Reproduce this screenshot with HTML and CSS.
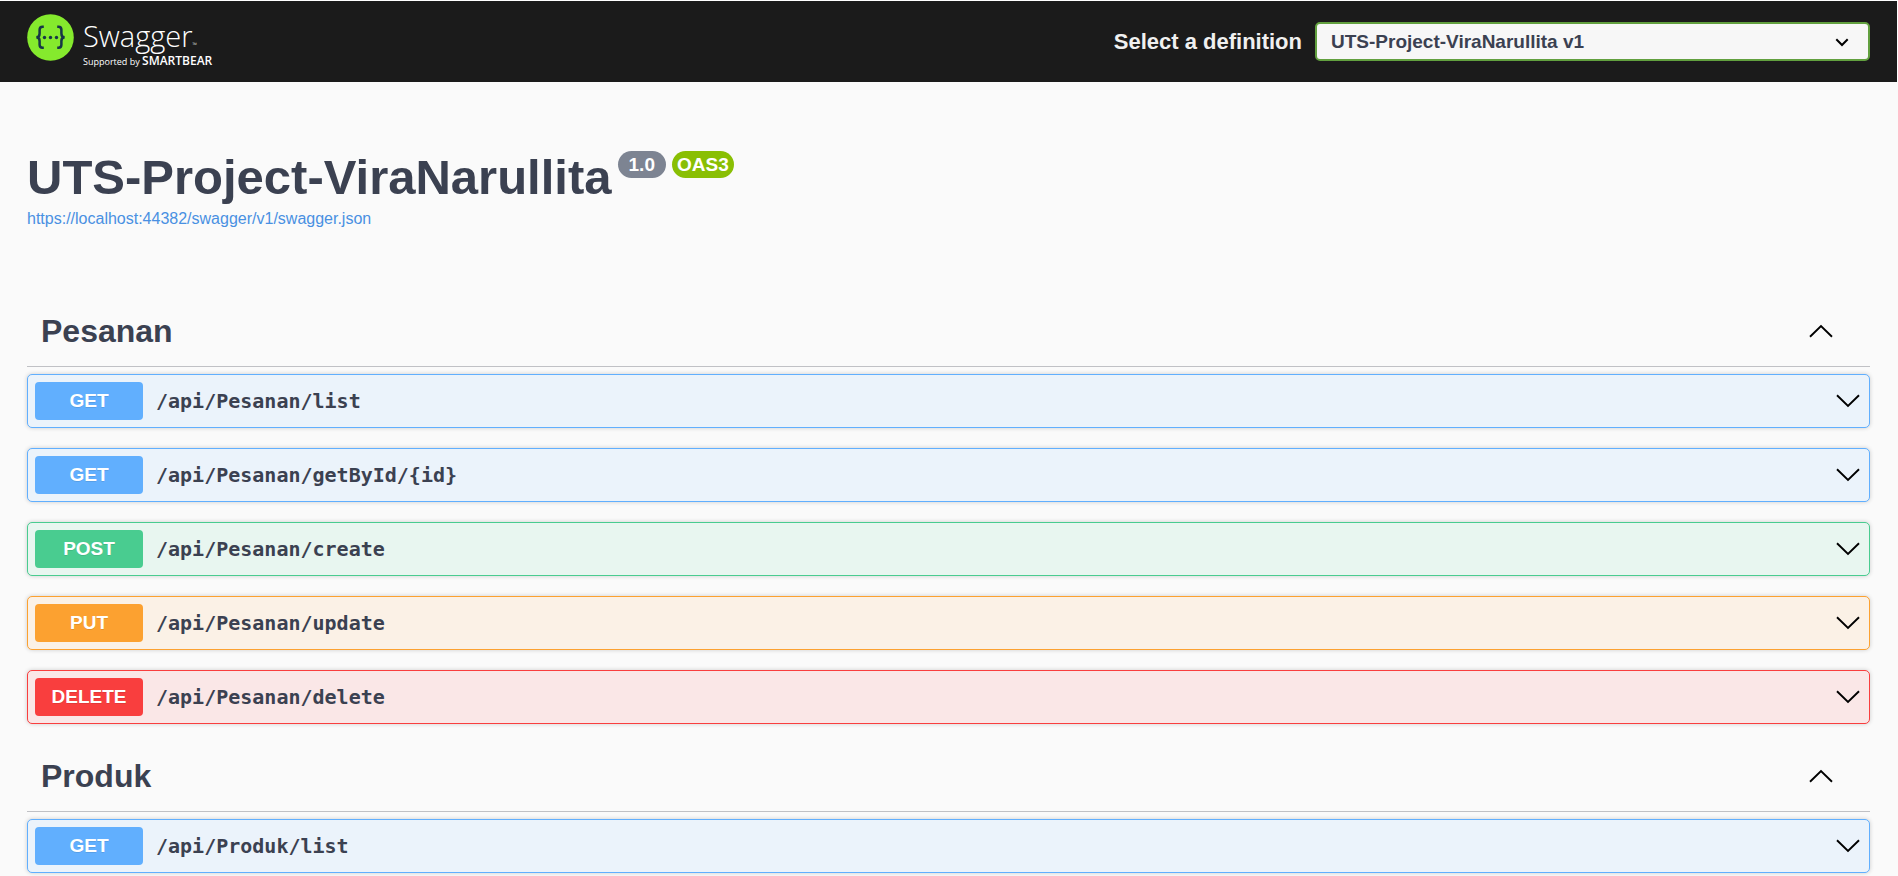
FILE: index.html
```html
<!DOCTYPE html>
<html lang="en">
<head>
<meta charset="utf-8">
<title>Swagger UI</title>
<link rel="stylesheet" href="styles.css">
</head>
<body>
<svg class="sprite" aria-hidden="true">
  <symbol id="arrow-down" viewBox="0 0 24 14"><path d="M1 1.2 12 12 23 1.2" fill="none" stroke="#000" stroke-width="1.9"/></symbol>
  <symbol id="arrow-up" viewBox="0 0 24 14"><path d="M1 12.8 12 2 23 12.8" fill="none" stroke="#000" stroke-width="1.9"/></symbol>
</svg>
<header class="topbar">
  <a class="logo" href="#" aria-label="Swagger, supported by SmartBear">
    <svg class="logo-mark" viewBox="0 0 47 47" aria-hidden="true">
      <circle cx="23.5" cy="23.5" r="23.3" fill="#85ea2d"/>
      <g fill="none" stroke="#173647" stroke-width="2.5">
        <path d="M16.8 12.8h-1.2c-2.1 0-3 1-3 3v3.700c0 2.400-.9 3.800-3.300 3.800 2.400 0 3.300 1.400 3.300 3.800v3.700c0 2 .9 3 3 3h1.200"/>
        <path d="M30.200 12.800h1.200c2.100 0 3 1 3 3v3.700c0 2.400.9 3.800 3.300 3.800-2.400 0-3.300 1.400-3.300 3.800v3.700c0 2-.9 3-3 3h-1.200"/>
      </g>
      <g fill="#173647"><circle cx="17.500" cy="23.500" r="1.700"/><circle cx="23.500" cy="23.500" r="1.700"/><circle cx="29.500" cy="23.500" r="1.700"/></g>
    </svg>
    <span class="logo-text">
      <span class="logo-name">Swagger<small class="logo-tm">™</small></span>
      <span class="logo-support">Supported by <b class="logo-brand">SMARTBEAR</b></span>
    </span>
  </a>
  <div class="definition">
    <label class="definition-label" for="definition">Select a definition</label>
    <div class="select-wrap">
      <select class="definition-select" id="definition"><option>UTS-Project-ViraNarullita v1</option></select>
      <svg class="select-arrow" viewBox="0 0 14 9" aria-hidden="true"><path d="M1.300 1.300 7 7l5.700-5.700" fill="none" stroke="#000" stroke-width="2"/></svg>
    </div>
  </div>
</header>
<main class="page">
  <section class="info">
    <div class="heading">
      <h1 class="title">UTS-Project-ViraNarullita</h1>
      <span class="version">1.0</span>
      <span class="version version-oas">OAS3</span>
    </div>
    <a class="spec-link" href="#">https://localhost:44382/swagger/v1/swagger.json</a>
  </section>
  <section class="tag">
    <button class="tag-header" type="button"><span class="tag-name">Pesanan</span><svg class="arrow"><use href="#arrow-up"/></svg></button>
    <button class="op get" type="button"><span class="method">GET</span><span class="path">/api/Pesanan/list</span><svg class="arrow"><use href="#arrow-down"/></svg></button>
    <button class="op get" type="button"><span class="method">GET</span><span class="path">/api/Pesanan/getById/{id}</span><svg class="arrow"><use href="#arrow-down"/></svg></button>
    <button class="op post" type="button"><span class="method">POST</span><span class="path">/api/Pesanan/create</span><svg class="arrow"><use href="#arrow-down"/></svg></button>
    <button class="op put" type="button"><span class="method">PUT</span><span class="path">/api/Pesanan/update</span><svg class="arrow"><use href="#arrow-down"/></svg></button>
    <button class="op delete" type="button"><span class="method">DELETE</span><span class="path">/api/Pesanan/delete</span><svg class="arrow"><use href="#arrow-down"/></svg></button>
  </section>
  <section class="tag">
    <button class="tag-header" type="button"><span class="tag-name">Produk</span><svg class="arrow"><use href="#arrow-up"/></svg></button>
    <button class="op get" type="button"><span class="method">GET</span><span class="path">/api/Produk/list</span><svg class="arrow"><use href="#arrow-down"/></svg></button>
  </section>
</main>
</body>
</html>
```
FILE: styles.css
```css
* { box-sizing: border-box; }
body {
  margin: 0;
  background: #fafafa;
  color: #3b4151;
  font-family: "Liberation Sans", Arial, sans-serif;
}
button { font: inherit; color: inherit; text-align: left; cursor: pointer; }
.sprite { display: none; }

.topbar {
  display: flex;
  align-items: center;
  justify-content: space-between;
  padding: 13px 27px;
  border-top: 1px solid #fff;
  border-right: 1px solid #fff;
  background: #1b1b1b;
}
.logo { display: flex; gap: 9px; color: #fff; text-decoration: none; font-family: "Open Sans", sans-serif; }
.logo-mark { width: 47px; height: 47px; }
.logo-text { display: flex; flex-direction: column; padding-top: 3px; }
.logo-name { font-size: 29px; font-weight: 300; line-height: 38px; }
.logo-tm { font-size: 6px; line-height: 1; }
.logo-support { font-size: 9px; line-height: 14px; white-space: nowrap; }
.logo-brand { font-size: 12px; font-weight: 600; line-height: 1; }

.definition { display: flex; align-items: center; gap: 13px; }
.definition-label { color: #f0f0f0; font-size: 22px; font-weight: 700; }
.select-wrap { position: relative; width: 555px; }
.definition-select {
  display: block;
  width: 100%;
  padding: 7px 44px 6px 14px;
  border: 2px solid #62a03f;
  border-radius: 5px;
  background: #f7f7f7;
  color: #3b4151;
  font: 700 19px/22px "Liberation Sans", Arial, sans-serif;
  appearance: none;
}
.select-arrow { position: absolute; right: 21px; top: 16px; width: 14px; height: 9px; pointer-events: none; }

.page { padding: 0 28px 0 27px; }
.info { padding: 66px 0 67px; }
.heading { display: flex; align-items: flex-start; gap: 6px; }
.title { margin: 0; font-size: 49px; line-height: 58px; }
.version {
  margin-top: 3px;
  padding: 0 11px;
  border-radius: 14px;
  background: #7d8492;
  color: #fff;
  font-size: 19px;
  font-weight: 700;
  line-height: 27px;
}
.version-oas { padding: 0 5px; background: #89bf04; }
.spec-link { display: block; width: fit-content; color: #4990e2; font-size: 16px; line-height: 26px; text-decoration: none; }

.tag-header {
  display: flex;
  align-items: center;
  justify-content: space-between;
  width: 100%;
  margin-bottom: 7px;
  padding: 13px 37px 16px 14px;
  border: 0;
  border-bottom: 1px solid #c0c1c5;
  background: none;
}
.tag-name { font-size: 32px; font-weight: 700; line-height: 38px; }
.arrow { width: 24px; height: 14px; }

.op {
  display: flex;
  align-items: center;
  width: 100%;
  margin-bottom: 20px;
  padding: 7px 9px 7px 7px;
  border: 1px solid;
  border-radius: 5px;
  box-shadow: 0 0 4px rgba(0, 0, 0, .19);
}
.method {
  width: 108px;
  border-radius: 4px;
  color: #fff;
  font-size: 19px;
  font-weight: 700;
  line-height: 38px;
  text-align: center;
  text-shadow: 0 1px 0 rgba(0, 0, 0, .1);
}
.path { flex: 1; padding-left: 13px; color: #3b4151; font: 700 20px/24px "DejaVu Sans Mono", monospace; }

.get { border-color: #61affe; background: #ebf3fb; }
.get .method { background: #61affe; }
.post { border-color: #49cc90; background: #e8f6f0; }
.post .method { background: #49cc90; }
.put { border-color: #fca130; background: #fbf1e6; }
.put .method { background: #fca130; }
.delete { border-color: #f93e3e; background: #fae7e7; }
.delete .method { background: #f93e3e; }
```
